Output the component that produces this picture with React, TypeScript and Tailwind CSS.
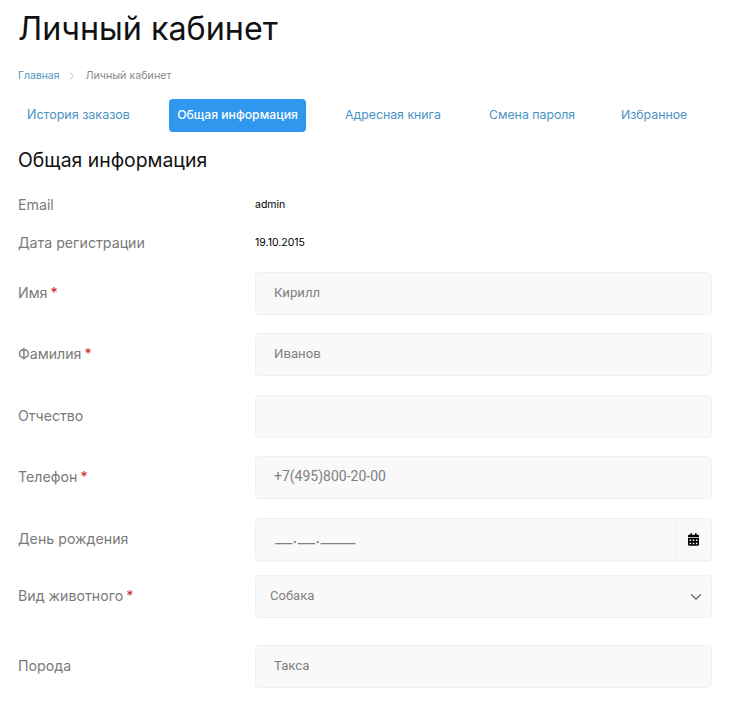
import React from "react";
import { ChevronDown, ChevronRight } from "lucide-react";

const labelCls = "w-[237px] shrink-0 text-[14.2px] text-[#7a7a7a]";

function Label({ text, req }: { text: string; req?: boolean }) {
  return (
    <div className={`${labelCls} pb-[2px]`}>
      {text}
      {req && <span className="ml-[3px] text-[#c9252d]">*</span>}
    </div>
  );
}

function Row({ label, req, value, mb, num }: { label: string; req?: boolean; value?: string; mb: string; num?: boolean }) {
  return (
    <div className={`flex items-center ${mb}`}>
      <Label text={label} req={req} />
      <div className={`h-[43px] w-[457px] rounded-[4px] border border-[#f0f0f0] bg-[#f9f9f9] px-[18px] font-['Roboto',sans-serif] leading-[39px] text-[#808080] ${num ? "text-[14px]" : "text-[13.2px]"}`}>
        {value}
      </div>
    </div>
  );
}

export default function App() {
  return (
    <div className="h-[707px] w-[740px] overflow-hidden bg-white pl-[18px] pt-[9px] font-['Inter','Noto_Sans',sans-serif] text-[#111]">
      <h1 className="text-[32.3px] leading-[40px] font-normal text-[#111]">Личный кабинет</h1>
      <div className="mt-[19px] flex items-center text-[10.4px] leading-[16px]">
        <span className="text-[#4f94c4]">Главная</span>
        <ChevronRight className="mx-[7px] h-3 w-3 text-[#bbb]" />
        <span className="text-[10.7px] text-[#8a8a8a]">Личный кабинет</span>
      </div>
      <div className="mt-[15px] flex h-[33px] items-center text-[12.3px] text-[#4a92c6]">
        <span className="ml-[9px] w-[142px] text-[12.5px]">История заказов</span>
        <span className="flex h-[33px] w-[137px] items-center justify-center rounded-[4px] bg-[#3097ee] text-[12.2px] font-medium text-white">Общая информация</span>
        <span className="ml-[39px] w-[144px]">Адресная книга</span>
        <span className="w-[132px]">Смена пароля</span>
        <span>Избранное</span>
      </div>
      <h2 className="mt-[14px] text-[19.4px] leading-[28px] font-normal text-[#111]">Общая информация</h2>
      <div className="mt-[21px] flex h-[20px] items-center">
        <div className={labelCls}>Email</div>
        <div className="text-[10.5px] text-black">admin</div>
      </div>
      <div className="mt-[18px] flex h-[20px] items-center">
        <div className={labelCls}>Дата регистрации</div>
        <div className="text-[10.5px] text-black">19.10.2015</div>
      </div>
      <div className="mt-[19px]">
        <Row label="Имя" req value="Кирилл" mb="mb-[18px]" />
        <Row label="Фамилия" req value="Иванов" mb="mb-[19px]" />
        <Row label="Отчество" mb="mb-[18px]" />
        <Row label="Телефон" req value="+7(495)800-20-00" mb="mb-[19px]" num />
        <div className="mb-[14px] flex items-center">
          <Label text="День рождения" />
          <div className="flex h-[43px] w-[457px] rounded-[4px] border border-[#f0f0f0] bg-[#f9f9f9] shadow-[0_1px_1px_rgba(0,0,0,0.04)]">
            <div className="flex-1 px-[19px] font-['Roboto',sans-serif] text-[19px] leading-[36px] tracking-[0.2px] text-[#808080]">__.__.____</div>
            <div className="flex w-[36px] items-center justify-center border-l border-[#f0f0f0]">
              <svg width="11" height="13" viewBox="0 0 448 512" fill="#000"><path d="M0 464c0 26.500 21.500 48 48 48h352c26.500 0 48-21.500 48-48V192H0v272zm320-196c0-6.600 5.400-12 12-12h40c6.600 0 12 5.400 12 12v40c0 6.600-5.400 12-12 12h-40c-6.600 0-12-5.400-12-12v-40zm0 128c0-6.600 5.400-12 12-12h40c6.600 0 12 5.400 12 12v40c0 6.600-5.400 12-12 12h-40c-6.600 0-12-5.400-12-12v-40zM192 268c0-6.600 5.400-12 12-12h40c6.600 0 12 5.400 12 12v40c0 6.600-5.400 12-12 12h-40c-6.600 0-12-5.400-12-12v-40zm0 128c0-6.600 5.400-12 12-12h40c6.600 0 12 5.400 12 12v40c0 6.600-5.400 12-12 12h-40c-6.600 0-12-5.400-12-12v-40zM64 268c0-6.600 5.400-12 12-12h40c6.600 0 12 5.400 12 12v40c0 6.600-5.400 12-12 12H76c-6.600 0-12-5.400-12-12v-40zm0 128c0-6.600 5.400-12 12-12h40c6.600 0 12 5.400 12 12v40c0 6.600-5.400 12-12 12H76c-6.600 0-12-5.400-12-12v-40zM400 64h-48V16c0-8.800-7.200-16-16-16h-32c-8.800 0-16 7.200-16 16v48H160V16c0-8.800-7.200-16-16-16h-32c-8.800 0-16 7.200-16 16v48H48C21.500 64 0 85.500 0 112v48h448v-48c0-26.500-21.500-48-48-48z"/></svg>
            </div>
          </div>
        </div>
        <div className="mb-[27px] flex items-center">
          <Label text="Вид животного" req />
          <div className="flex h-[43px] w-[457px] items-center justify-between rounded-[4px] border border-[#f0f0f0] bg-[#f9f9f9] pl-[14px] pr-[6px] font-['Roboto',sans-serif] text-[13px] text-[#808080]">
            <span className="pb-[2px]">Собака</span>
            <ChevronDown strokeWidth={1.5} className="h-[18px] w-[18px] text-[#666]" />
          </div>
        </div>
        <Row label="Порода" value="Такса" mb="" />
      </div>
    </div>
  );
}
